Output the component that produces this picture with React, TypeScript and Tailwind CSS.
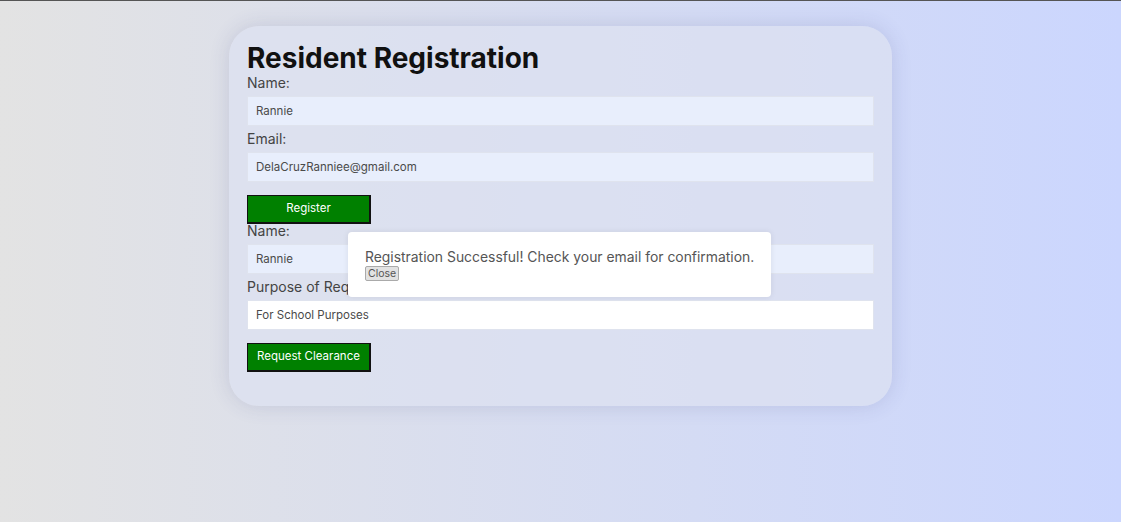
import React from 'react';

const font = { fontFamily: 'Inter, "Noto Sans", sans-serif' };

const Field = ({ label, value, white }: { label: string; value: string; white?: boolean }) => (
  <div>
    <label className="block text-[14px] leading-[14px] text-[#444]">{label}</label>
    <input
      readOnly
      value={value}
      className={`mb-[6px] mt-[6px] block h-[30px] w-full border border-[#dfe3ee] px-[8px] text-[11.5px] text-[#4a4a4a] outline-none ${
        white ? 'bg-white' : 'bg-[#e8eefc]'
      }`}
    />
  </div>
);

const GreenButton = ({ children }: { children: React.ReactNode }) => (
  <button className="mt-[13px] block h-[29px] w-[124px] border border-b-2 border-r-2 border-[#111] bg-[#008000] text-[11.5px] text-white">
    {children}
  </button>
);

export default function App() {
  return (
    <div
      className="relative min-h-[522px] border-t border-[#555] bg-gradient-to-r from-[#e3e3e3] to-[#cbd6fe]"
      style={font}
    >
      <div className="mx-auto mt-[25px] w-[663px] rounded-[30px] bg-[#dde1f1]/70 px-[18px] pb-[34px] pt-[18px] shadow-[0_0_20px_rgba(60,70,130,0.16)]">
        <h1 className="pb-[3px] text-[28px] font-bold leading-[29px] text-[#111]">Resident Registration</h1>
        <Field label="Name:" value="Rannie" />
        <Field label="Email:" value="DelaCruzRanniee@gmail.com" />
        <GreenButton>Register</GreenButton>
        <Field label="Name:" value="Rannie" />
        <Field label="Purpose of Request:" value="For School Purposes" white />
        <GreenButton>Request Clearance</GreenButton>
      </div>

      <div className="absolute left-[348px] top-[231px] h-[65px] w-[423px] rounded-[4px] bg-white px-[17px] pt-[16px] shadow-[0_0_6px_rgba(0,0,0,0.08)]">
        <p className="whitespace-nowrap text-[13.9px] leading-[18px] text-[#555]">
          Registration Successful! Check your email for confirmation.
        </p>
        <button className="block h-[15px] rounded-[2px] border border-[#aaa] bg-[#e2e2e2] px-[2px] text-[10.5px] leading-[12px] text-[#555]">
          Close
        </button>
      </div>
    </div>
  );
}
